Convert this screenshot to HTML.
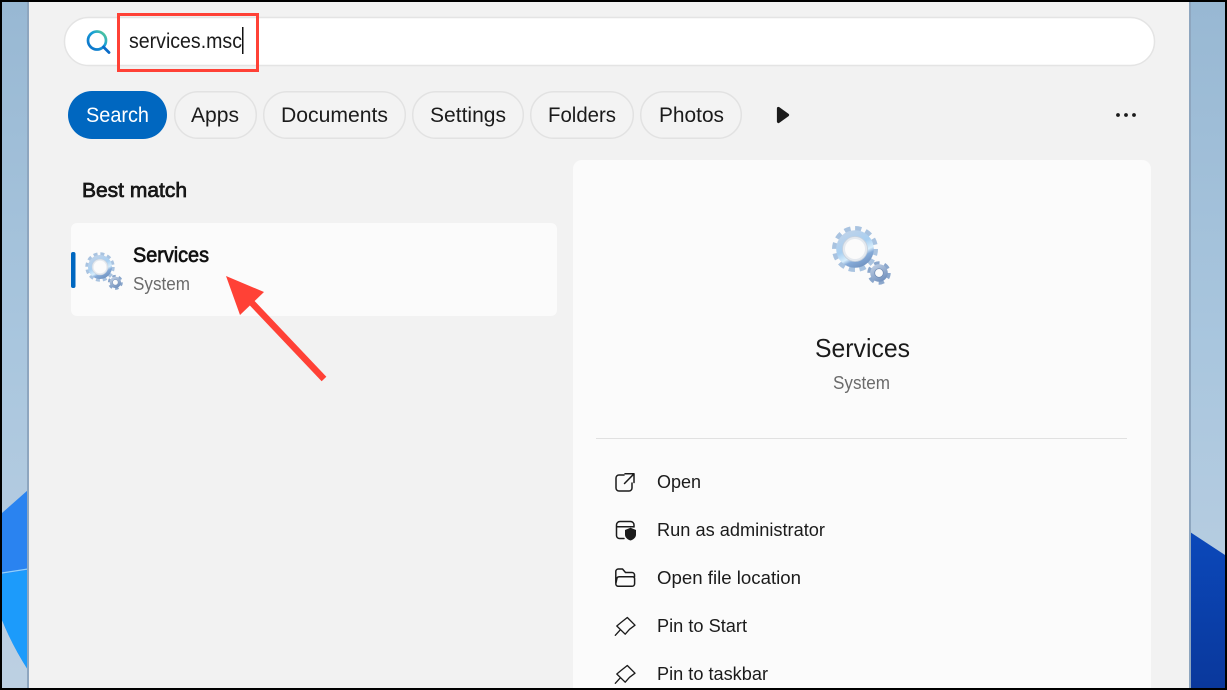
<!DOCTYPE html>
<html lang="en">
<head>
<meta charset="utf-8">
<title>Services search</title>
<style>
html,body{margin:0;padding:0;background:#000;width:1227px;height:690px;overflow:hidden}
svg{display:block}
text{font-family:"Liberation Sans",sans-serif;fill:#1b1b1b}
.sb{stroke:#111;stroke-width:.7px}
</style>
</head>
<body>
<svg width="1227" height="690" viewBox="0 0 1227 690" xmlns="http://www.w3.org/2000/svg">
<defs>
<linearGradient id="sky" x1="0" y1="0" x2="0" y2="1"><stop offset="0" stop-color="#98b8d3"/><stop offset=".5" stop-color="#a9c6de"/><stop offset="1" stop-color="#bdd0e2"/></linearGradient>
<linearGradient id="deep" x1="0" y1="0" x2="0" y2="1"><stop offset="0" stop-color="#0b48ba"/><stop offset="1" stop-color="#0a389c"/></linearGradient>
<linearGradient id="q" x1="0" y1="1" x2="1" y2="0"><stop offset="0" stop-color="#0a6cc8"/><stop offset=".6" stop-color="#18a0d8"/><stop offset="1" stop-color="#5fd08a"/></linearGradient>
<linearGradient id="g1" x1="0.2" y1="0" x2="0.7" y2="1"><stop offset="0" stop-color="#c2d3e8"/><stop offset=".45" stop-color="#a8cff1"/><stop offset=".66" stop-color="#d8eefc"/><stop offset=".76" stop-color="#86abd8"/><stop offset="1" stop-color="#6f91bf"/></linearGradient>
<linearGradient id="g2" x1="0" y1="0" x2="0.6" y2="1"><stop offset="0" stop-color="#c8d6e8"/><stop offset="1" stop-color="#7392be"/></linearGradient>
<g id="gears">
<circle cx="0" cy="0" r="20.500" fill="none" stroke="#a9c3e0" stroke-width="5" stroke-dasharray="6.200 4.530"/>
<circle cx="0" cy="0" r="18.800" fill="url(#g1)"/>
<circle cx="0" cy="0" r="12.500" fill="#e4e9ef" stroke="#c5d0dd" stroke-width=".8"/>
<circle cx="0" cy="0" r="10" fill="#fbfbfb"/>
<g transform="translate(24,24)">
<circle cx="0" cy="0" r="9.800" fill="none" stroke="#8ba7cc" stroke-width="3.800" stroke-dasharray="5.400 4.860"/>
<circle cx="0" cy="0" r="8.800" fill="url(#g2)"/>
<circle cx="0" cy="0" r="4.300" fill="#fbfbfb" stroke="#6f8ab2" stroke-width=".7"/>
</g>
</g>
<path id="pin" d="M12.300 1 L20 8.700 L14.500 12.800 L10.200 17.700 L1.800 9.500 L6 6 Z M5.200 13.400 L.3 18.800" fill="none" stroke="#1b1b1b" stroke-width="1.350" stroke-linejoin="round" stroke-linecap="round"/>
</defs>

<rect width="1227" height="690" fill="#000"/>
<rect x="2" y="2" width="1223" height="686" fill="url(#sky)"/>
<path d="M2 513 L28 490 V670 Q12 645 2 620 Z" fill="#2a83f0"/>
<path d="M2 574 L28 570 V670 Q12 645 2 620 Z" fill="#1c9bfb"/>
<line x1="2" y1="573" x2="28" y2="569" stroke="#8fd0fb" stroke-width="1.300"/>
<polygon points="1190,532 1225,555 1225,688 1190,688" fill="url(#deep)"/>

<rect x="27" y="2" width="2" height="686" fill="#8ea6bf"/>
<rect x="1189" y="2" width="2" height="686" fill="#8ea6bf"/>
<rect x="29" y="2" width="1160" height="686" fill="#f2f2f2"/>

<rect x="64.500" y="17.500" width="1090" height="48" rx="24" fill="#fff" stroke="#e4e4e4" stroke-width="1.500"/>
<circle cx="97" cy="40.500" r="9" fill="none" stroke="url(#q)" stroke-width="2.700"/>
<line x1="103.500" y1="47" x2="109" y2="52.500" stroke="#0a6cc8" stroke-width="2.800" stroke-linecap="round"/>
<text x="129" y="48" font-size="21" textLength="113" lengthAdjust="spacingAndGlyphs">services.msc</text>
<rect x="242" y="27" width="1.500" height="27" fill="#111"/>
<rect x="118.500" y="14.500" width="139" height="56" fill="none" stroke="#ff4136" stroke-width="3"/>

<rect x="68" y="91" width="99" height="48" rx="24" fill="#0067c0"/>
<text x="86" y="122" font-size="21" textLength="63" lengthAdjust="spacingAndGlyphs" style="fill:#fff">Search</text>
<g fill="#f3f3f3" stroke="#e2e2e2" stroke-width="1.500">
<rect x="174.700" y="91.700" width="81.600" height="46.600" rx="23.300"/>
<rect x="263.700" y="91.700" width="141.600" height="46.600" rx="23.300"/>
<rect x="412.700" y="91.700" width="110.600" height="46.600" rx="23.300"/>
<rect x="530.700" y="91.700" width="102.600" height="46.600" rx="23.300"/>
<rect x="640.700" y="91.700" width="100.600" height="46.600" rx="23.300"/>
</g>
<g font-size="21">
<text x="191" y="122" textLength="48" lengthAdjust="spacingAndGlyphs">Apps</text>
<text x="281" y="122" textLength="107" lengthAdjust="spacingAndGlyphs">Documents</text>
<text x="430" y="122" textLength="76" lengthAdjust="spacingAndGlyphs">Settings</text>
<text x="548" y="122" textLength="68" lengthAdjust="spacingAndGlyphs">Folders</text>
<text x="659" y="122" textLength="65" lengthAdjust="spacingAndGlyphs">Photos</text>
</g>
<path d="M778.500 108.500 L787.500 115 L778.500 121.500 Z" fill="#1b1b1b" stroke="#1b1b1b" stroke-width="3.200" stroke-linejoin="round"/>
<circle cx="1118" cy="115" r="1.900" fill="#1b1b1b"/>
<circle cx="1126" cy="115" r="1.900" fill="#1b1b1b"/>
<circle cx="1134" cy="115" r="1.900" fill="#1b1b1b"/>

<text class="sb" x="82" y="197" font-size="20.500" textLength="105" lengthAdjust="spacingAndGlyphs">Best match</text>
<rect x="71" y="223" width="486" height="93" rx="6" fill="#fbfbfb"/>
<rect x="71" y="252" width="4.500" height="36" rx="2" fill="#0067c0"/>
<use href="#gears" transform="translate(100,267) scale(.64)"/>
<text class="sb" x="133" y="262" font-size="21" textLength="76" lengthAdjust="spacingAndGlyphs" style="fill:#111">Services</text>
<text x="133" y="290" font-size="18" textLength="57" lengthAdjust="spacingAndGlyphs" style="fill:#6b6b6b">System</text>

<rect x="573" y="160" width="578" height="540" rx="9" fill="#fbfbfb"/>
<use href="#gears" transform="translate(855,249)"/>
<text x="815" y="357" font-size="26" textLength="95" lengthAdjust="spacingAndGlyphs">Services</text>
<text x="833" y="389" font-size="18" textLength="57" lengthAdjust="spacingAndGlyphs" style="fill:#6b6b6b">System</text>
<rect x="596" y="438" width="531" height="1" fill="#e1e1e1"/>

<path d="M624 475 H619 A3 3 0 0 0 616 478 V488 A3 3 0 0 0 619 491 H629 A3 3 0 0 0 632 488 V483 M625 473.800 H634 V482.500 M634 473.800 L624.500 483.500" fill="none" stroke="#1b1b1b" stroke-width="1.500" stroke-linecap="round" stroke-linejoin="round"/>
<path d="M624 538.500 H619.500 A3 3 0 0 1 616.500 535.500 V525 A3.500 3.500 0 0 1 620 521.500 H630.500 A3.500 3.500 0 0 1 634 525 V527 M616.500 526.800 H634" fill="none" stroke="#1b1b1b" stroke-width="1.500" stroke-linecap="round"/>
<path d="M630.500 527.800 L636 530 V534.500 C636 537.500 633.500 539.500 630.500 540.500 C627.500 539.500 625 537.500 625 534.500 V530 Z" fill="#1b1b1b"/>
<path d="M615.800 583 V571.500 A2.500 2.500 0 0 1 618.300 569 H622.500 L625.500 572.500 H632 A2.500 2.500 0 0 1 634.500 575 V577 M618.300 586.300 A2.500 2.500 0 0 1 615.800 583.800 L616.800 579 A2.500 2.500 0 0 1 619.200 576.800 H632.500 A2 2 0 0 1 634.600 579 V583.800 A2.500 2.500 0 0 1 632 586.300 Z" fill="none" stroke="#1b1b1b" stroke-width="1.500" stroke-linejoin="round" stroke-linecap="round"/>
<use href="#pin" transform="translate(615,616.500)"/>
<use href="#pin" transform="translate(615,664.500)"/>
<g font-size="18">
<text x="657" y="488" textLength="44" lengthAdjust="spacingAndGlyphs">Open</text>
<text x="657" y="536" textLength="168" lengthAdjust="spacingAndGlyphs">Run as administrator</text>
<text x="657" y="584" textLength="144" lengthAdjust="spacingAndGlyphs">Open file location</text>
<text x="657" y="632" textLength="90" lengthAdjust="spacingAndGlyphs">Pin to Start</text>
<text x="657" y="680" textLength="111" lengthAdjust="spacingAndGlyphs">Pin to taskbar</text>
</g>

<line x1="252" y1="303" x2="324" y2="379" stroke="#ff4136" stroke-width="6.500"/>
<polygon points="226,276 264,292 240,315" fill="#ff4136"/>

<rect x="0" y="0" width="1227" height="2" fill="#000"/>
<rect x="0" y="688" width="1227" height="2" fill="#000"/>
<rect x="0" y="0" width="2" height="690" fill="#000"/>
<rect x="1225" y="0" width="2" height="690" fill="#000"/>
</svg>
</body>
</html>
